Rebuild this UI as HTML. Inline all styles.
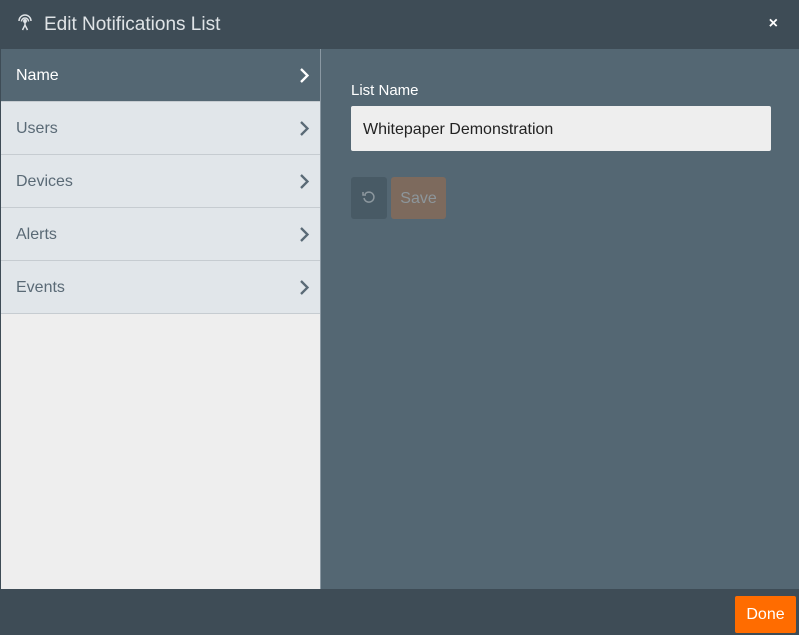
<!DOCTYPE html>
<html><head><style>
*{margin:0;padding:0;box-sizing:border-box}
body{width:799px;height:635px;background:#3e4c56;font-family:"Liberation Sans",sans-serif;position:relative;overflow:hidden}
.hdr{position:absolute;left:0;top:0;width:799px;height:49px;background:#3e4c56;color:#dfe3e6;font-size:19px}
.hdr .t{position:absolute;left:44px;top:14px}
.hdr .x{position:absolute;right:21px;top:15px;font-size:16px;color:#fff;font-weight:bold}
.side{position:absolute;left:1px;top:49px;width:319px;height:540px;background:#eeeeee}
.item{height:53px;border-bottom:1px solid #c6ccd1;background:#e1e6ea;color:#5a6a76;font-size:16px;padding:18px 0 0 15px;position:relative}
.item.on{background:#546773;color:#fff;border-bottom:1px solid #c6ccd1}
.item svg{position:absolute;right:10px;top:18px}
.main{position:absolute;left:320px;top:49px;width:479px;height:540px;background:#546773;border-left:1px solid #8a98a2}
.lbl{position:absolute;left:30px;top:33px;color:#fff;font-size:15px}
.inp{position:absolute;left:30px;top:57px;width:420px;height:45px;background:#eeeeee;border-radius:2px;font-size:16px;color:#222;padding:15px 0 0 12px}
.rb{position:absolute;left:30px;top:128px;width:36px;height:42px;background:#485a65;border-radius:3px}
.sb{position:absolute;left:70px;top:128px;width:55px;height:42px;background:#7d6a5d;border-radius:3px;color:#8d969b;font-size:16px;text-align:center;padding-top:13px}
.done{position:absolute;left:735px;top:596px;width:61px;height:37px;background:#ff6c00;border-radius:2px;color:#fff;font-size:16px;text-align:center;padding-top:10px}
</style></head><body>
<div class="hdr">
<svg style="position:absolute;left:16px;top:13px" width="18" height="18" viewBox="0 0 18 18" fill="none" stroke="#dfe3e6" stroke-width="1.5"><path d="M3 8a6 6 0 0 1 12 0"/><path d="M5.5 8.5a3.5 3.5 0 0 1 7 0"/><circle cx="9" cy="8" r="1.2" fill="#dfe3e6"/><path d="M9 9v4M6.5 17L9 12l2.5 5"/></svg>
<div class="t">Edit Notifications List</div><div class="x">×</div></div>
<div class="side">
<div class="item on">Name<svg width="11" height="17" viewBox="0 0 11 17"><path d="M2 2l6.5 6.5L2 15" stroke="#fff" stroke-width="2.3" fill="none"/></svg></div>
<div class="item">Users<svg width="11" height="17" viewBox="0 0 11 17"><path d="M2 2l6.5 6.5L2 15" stroke="#5a6a76" stroke-width="2.3" fill="none"/></svg></div>
<div class="item">Devices<svg width="11" height="17" viewBox="0 0 11 17"><path d="M2 2l6.5 6.5L2 15" stroke="#5a6a76" stroke-width="2.3" fill="none"/></svg></div>
<div class="item">Alerts<svg width="11" height="17" viewBox="0 0 11 17"><path d="M2 2l6.5 6.5L2 15" stroke="#5a6a76" stroke-width="2.3" fill="none"/></svg></div>
<div class="item">Events<svg width="11" height="17" viewBox="0 0 11 17"><path d="M2 2l6.5 6.5L2 15" stroke="#5a6a76" stroke-width="2.3" fill="none"/></svg></div>
</div>
<div class="main">
<div class="lbl">List Name</div>
<div class="inp">Whitepaper Demonstration</div>
<div class="rb"><svg style="position:absolute;left:11px;top:13px" width="14" height="14" viewBox="0 0 14 14" fill="none" stroke="#8d989f" stroke-width="1.5"><path d="M3 4a5 5 0 1 1-1 4"/><path d="M1 2v3h3"/></svg></div>
<div class="sb">Save</div>
</div>
<div class="done">Done</div>
</body></html>
